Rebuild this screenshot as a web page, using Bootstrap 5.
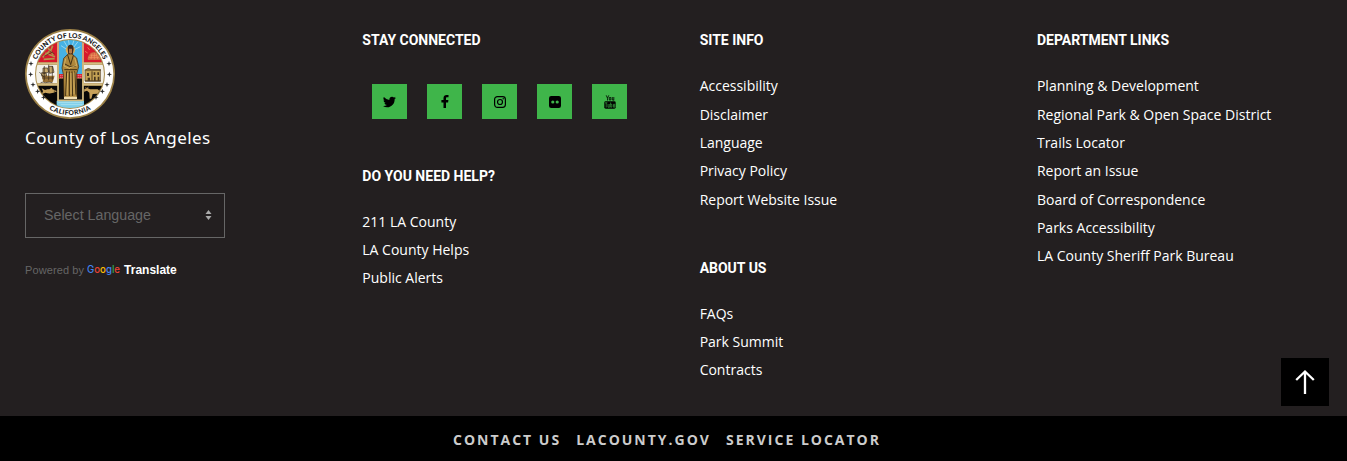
<!DOCTYPE html>
<html lang="en">
<head>
<meta charset="utf-8">
<meta name="viewport" content="width=device-width, initial-scale=1">
<title>County of Los Angeles Parks</title>
<link href="https://cdn.jsdelivr.net/npm/bootstrap@5.3.0/dist/css/bootstrap.min.css" rel="stylesheet">
<style>
body{background:#231f20;color:#fff;font:14px/20px "Open Sans",sans-serif;height:461px;overflow:hidden}
.site-footer{height:416px;overflow:hidden;padding-top:30px}
.footer-cols{--bs-gutter-x:30px;margin:0 -12.3px 0 10px}
.foot-title{font:700 14px/20px Roboto,sans-serif;margin:0 0 22.2px}
.foot-list{margin:0 0 44px}
.foot-list a{display:block;line-height:28.35px;color:#fff;text-decoration:none;white-space:nowrap}
.foot-list + .foot-title,.socials + .foot-title{margin-bottom:21.700px}
.socials{gap:20px;margin:34px 0 47px 10px}
.socials a{width:35px;height:35px;background:#3fb54a}
.seal{display:block;width:90px;height:90px;margin-top:-1px}
.county{font:17px/24px "Noto Sans",sans-serif;letter-spacing:.4px;margin:7px 0 43px}
.lang{width:200px;height:45px;border:1px solid #666;padding:0 12px 1px 18px;color:#666;font:14.25px "Liberation Sans",sans-serif}
.powered{font:11px/20px "Liberation Sans",sans-serif;color:#666;margin-top:22px}
.powered span{letter-spacing:.1px}
.powered svg{margin:0 3px}
.powered b{font-size:12px;color:#fff}
.bottom-bar{height:45px;background:#000;gap:15px;padding:3px 13px 0 0}
.bottom-bar a{color:#ccc;font-weight:700;letter-spacing:2px;text-decoration:none}
.to-top{right:18px;bottom:55px;width:48px;height:48px;background:#000}
</style>
<script src="https://cdn.jsdelivr.net/npm/bootstrap@5.3.0/dist/js/bootstrap.bundle.min.js"></script>
</head>
<body>
<footer class="site-footer">
<div class="row footer-cols">
<div class="col-3">
<svg class="seal" viewBox="30 28 270 270" role="img" aria-label="County seal">
<defs><clipPath id="disc"><circle cx="165" cy="163" r="102"/></clipPath>
<path id="topArc" d="M56 163a109 109 0 0 1 218 0"/>
<path id="botArc" d="M42 163a123 123 0 0 0 246 0"/></defs>
<circle cx="165" cy="163" r="135" fill="#9d8248"/><circle cx="165" cy="163" r="130" fill="#fff"/>
<circle cx="165" cy="163" r="105" fill="#a88c4d"/>
<g clip-path="url(#disc)">
<path fill="#d7192d" d="M60 55h75v73H60zM198 55h75v73h-75z"/><path fill="#f3f0e7" d="M60 135h66v56H60zM206 135h70v56h-70z"/>
<path fill="#090807" d="M60 198h70v70H60zM203 198h70v70h-70z"/>
<path fill="#46b2e5" d="M132 55h69v109h-69z"/><path fill="#d7192d" d="M132 163h69v13h-69z"/><path fill="#111" d="M132 177h69v67h-69z"/><path fill="#7ccfeb" d="M125 243h82v28h-82z"/>
<path fill="none" stroke="#d5bd82" stroke-width="5" d="M60 131h69M204 131h70M60 195h69M204 195h70M129 55v189M204 55v189M129 242h75"/>
<path stroke="#fff" stroke-width="2" d="M136 167h63M136 173h63" stroke-dasharray="3 3"/>
<path stroke="#bce8f3" stroke-width="2" d="M166 96l-28-18M166 96l-20-33M166 96l-6-38M166 96l12-38M166 96l23-30M166 96l30-15M130 249h72M137 255h66"/>
<circle cx="166" cy="91" r="14" fill="#d6aa5a"/><path d="M158 86q0-12 9-11 9 0 9 13l-3 17h-13z" fill="#40291c"/><path d="M162 87h9v12q-5 8-9 0z" fill="#b27849"/>
<path fill="#ae873c" stroke="#392610" stroke-width="2" d="M159 103l-13 13-5 29 4 19 2 72h39l-1-73 6-22-6-26-14-12z"/>
<path fill="none" stroke="#403014" stroke-width="3" d="M158 106l9 29 8-28M148 132l15 8h19M148 150h38M155 155l-3 74M163 155v74M171 155l2 74M179 155l4 70"/>
<path fill="none" stroke="#e5c778" stroke-width="2" d="M152 117l-5 22 18 8M179 114l6 23-20 7M158 160l-2 66M168 160v64M177 158v66"/>
<path fill="#f0ddb0" d="M147 231h39v7h-39z"/>
<path d="M83 113l25-22 5-13M91 100l29 11M86 119l33-2M99 85l16 20" stroke="#b4944b" stroke-width="5" fill="none"/><path d="M87 110l26-13M103 94l16 9" stroke="#542016" stroke-width="2"/>
<path d="M219 119q3-20 17-20 15 0 18 20z" fill="#de5c44" stroke="#bc954c" stroke-width="2"/><path d="M221 113h32M226 107h20M231 101l-3 17M238 99v20M244 101l4 17M218 100l-8-5M224 91l-6-8M234 86V76M245 88l5-8M252 96l7-5" stroke="#eba060" stroke-width="2"/>
<path d="M80 168h39l-6 20H85z" fill="#9c7436"/><path d="M84 145h14l3 12-17 6zM101 140h12l4 18-13 3zM80 159h13l2 10H80z" fill="#c7a96c" stroke="#35291d" stroke-width="2"/><path d="M88 139v43M101 135v47M112 139v43M73 157l14 15M81 175h35M77 189q8-4 15 0 11-4 20 0" fill="none" stroke="#35291d" stroke-width="2"/>
<path d="M210 153q9-12 18-3h28v34h-46z" fill="#c3a254" stroke="#4d381c" stroke-width="2"/><path d="M209 151h49M231 155v28M210 184h48" stroke="#4d381c" stroke-width="3"/><path d="M216 160h6v9h-6zM218 174h7v9h-7zM236 158h5v8h-5zM247 158h5v8h-5zM237 171h5v12h-5zM248 171h5v12h-5z" fill="#47361d"/>
<path d="M80 206l10 5q18-8 36 4-17 10-35 4l-11 5 4-9zM103 209l7-5 4 7" fill="#c6a15b"/><circle cx="118" cy="214" r="1.500"/>
<path d="M208 208l9-3 8 4h23l6 5-1 22h-5v-14l-15 1-4 14h-5l-1-18-7-6-9 3z" fill="#c8a15a"/><path d="M211 202l4 4 6-4M253 210l3 15" stroke="#c8a15a" stroke-width="2" fill="none"/>
</g>
<g font-family="Lato,sans-serif" font-size="20" font-weight="900" fill="#161616"><text><textPath href="#topArc" startOffset="50%" text-anchor="middle" textLength="254">COUNTY OF LOS ANGELES</textPath></text><text><textPath href="#botArc" startOffset="50%" text-anchor="middle" textLength="132">CALIFORNIA</textPath></text></g>
<g fill="#292929"><path id="st" d="M48 124l2 6 6 2-6 2-2 6-2-6-6-2 6-2z"/><use href="#st" x="-1" y="32"/><use href="#st" x="6" y="63"/><use href="#st" x="20" y="83"/><use href="#st" x="38" y="101"/><use href="#st" x="234"/><use href="#st" x="235" y="32"/><use href="#st" x="228" y="63"/><use href="#st" x="214" y="83"/><use href="#st" x="195" y="101"/></g>
</svg>
<div class="county">County of Los Angeles</div>
<div class="lang d-flex align-items-center justify-content-between"><span>Select Language</span><svg width="7" height="10" viewBox="0 0 7 10" fill="#aaa"><path d="M.5 4L3.5 0l3 4zM.5 6h6l-3 4z"/></svg></div>
<div class="powered d-flex align-items-center"><span>Powered by</span><svg width="34" height="14" viewBox="0 0 34 14" font-family="Inter,sans-serif" font-size="10.700" font-weight="500"><text y="10" textLength="33" lengthAdjust="spacingAndGlyphs"><tspan fill="#4285f4">G</tspan><tspan fill="#ea4335">o</tspan><tspan fill="#fbbc05">o</tspan><tspan fill="#4285f4">g</tspan><tspan fill="#34a853">l</tspan><tspan fill="#ea4335">e</tspan></text></svg><b>Translate</b></div>
</div>
<div class="col-3">
<h2 class="foot-title">STAY CONNECTED</h2>
<div class="socials d-flex">
<a href="#" aria-label="Twitter" class="d-flex align-items-center justify-content-center"><svg width="13" height="13" viewBox="0 0 16 16"><path d="M5 15c6 0 9.300-5 9.300-9.300v-.4A7 7 0 0 0 16 3.500a7 7 0 0 1-1.900.5A3.300 3.300 0 0 0 15.500 2.200a7 7 0 0 1-2.100.8A3.300 3.300 0 0 0 7.900 6 9.300 9.300 0 0 1 1.100 2.600a3.300 3.300 0 0 0 1 4.400A3.200 3.200 0 0 1 .6 6.600a3.300 3.300 0 0 0 2.600 3.200 3.200 3.200 0 0 1-1.500.1 3.300 3.300 0 0 0 3.100 2.300A6.600 6.600 0 0 1 0 13.500 9.300 9.300 0 0 0 5 15"/></svg></a>
<a href="#" aria-label="Facebook" class="d-flex align-items-center justify-content-center"><svg width="8" height="14" viewBox="0 0 8 14"><path d="M7.500.1v2.200H6.200c-1 0-1.200.5-1.200 1.200v1.500h2.400l-.3 2.500H5V13H2.500V7.500H.4V5h2.100V3.200C2.500 1.100 3.800 0 5.600 0z"/></svg></a>
<a href="#" aria-label="Instagram" class="d-flex align-items-center justify-content-center"><svg width="12" height="12" viewBox="0 0 12 12" fill="none" stroke="#000" stroke-width="1.200"><rect x=".6" y=".6" width="10.800" height="10.800" rx="2.800"/><circle cx="6" cy="6" r="2.500"/><circle cx="9.200" cy="2.800" r=".7" fill="#000" stroke="none"/></svg></a>
<a href="#" aria-label="Flickr" class="d-flex align-items-center justify-content-center"><svg width="12" height="12" viewBox="0 0 12 12"><rect width="12" height="12" rx="2.200"/><circle cx="3.800" cy="6" r="1.600" fill="#3fb54a"/><circle cx="8.200" cy="6" r="1.600" fill="#3fb54a"/></svg></a>
<a href="#" aria-label="YouTube" class="d-flex align-items-center justify-content-center"><svg width="12" height="14" viewBox="0 0 12 14" fill="none" stroke="#000"><path d="M2.200.3l1.300 2.900v2.300M4.800.3L3.500 3.200M5.300 2.500h1.500v2.500H5.300zM8.300 2v3h1.500M9.800 2v3.500" stroke-width=".8"/><rect x=".3" y="6.300" width="11.400" height="7.400" rx="1.400" fill="#000" stroke="none"/><path d="M1 7.800h2.400M2.200 7.800v4.700M4 9v3.200h1.300M5.300 9v3.500M6.600 7.500v4.700h1.200V9.300H6.600M10.800 11v1.200H9.400V9.300h1.400v1.400H9.400" stroke="#3fb54a" stroke-width=".6"/></svg></a>
</div>
<h2 class="foot-title">DO YOU NEED HELP?</h2>
<nav class="foot-list"><a href="#">211 LA County</a><a href="#">LA County Helps</a><a href="#">Public Alerts</a></nav>
</div>
<div class="col-3">
<h2 class="foot-title">SITE INFO</h2>
<nav class="foot-list"><a href="#">Accessibility</a><a href="#">Disclaimer</a><a href="#">Language</a><a href="#">Privacy Policy</a><a href="#">Report Website Issue</a></nav>
<h2 class="foot-title">ABOUT US</h2>
<nav class="foot-list"><a href="#">FAQs</a><a href="#">Park Summit</a><a href="#">Contracts</a></nav>
</div>
<div class="col-3">
<h2 class="foot-title">DEPARTMENT LINKS</h2>
<nav class="foot-list"><a href="#">Planning &amp; Development</a><a href="#">Regional Park &amp; Open Space District</a><a href="#">Trails Locator</a><a href="#">Report an Issue</a><a href="#">Board of Correspondence</a><a href="#">Parks Accessibility</a><a href="#">LA County Sheriff Park Bureau</a></nav>
</div>
</div>
</footer>
<nav class="bottom-bar d-flex align-items-center justify-content-center"><a href="#">CONTACT US</a><a href="#">LACOUNTY.GOV</a><a href="#">SERVICE LOCATOR</a></nav>
<a href="#" aria-label="Back to top" class="to-top position-fixed d-flex align-items-center justify-content-center"><svg width="20" height="26" viewBox="0 0 20 26" fill="none" stroke="#fff" stroke-width="2.300"><path d="M10 25V2.500M1.200 11L10 2.500l8.800 8.500"/></svg></a>
</body>
</html>
